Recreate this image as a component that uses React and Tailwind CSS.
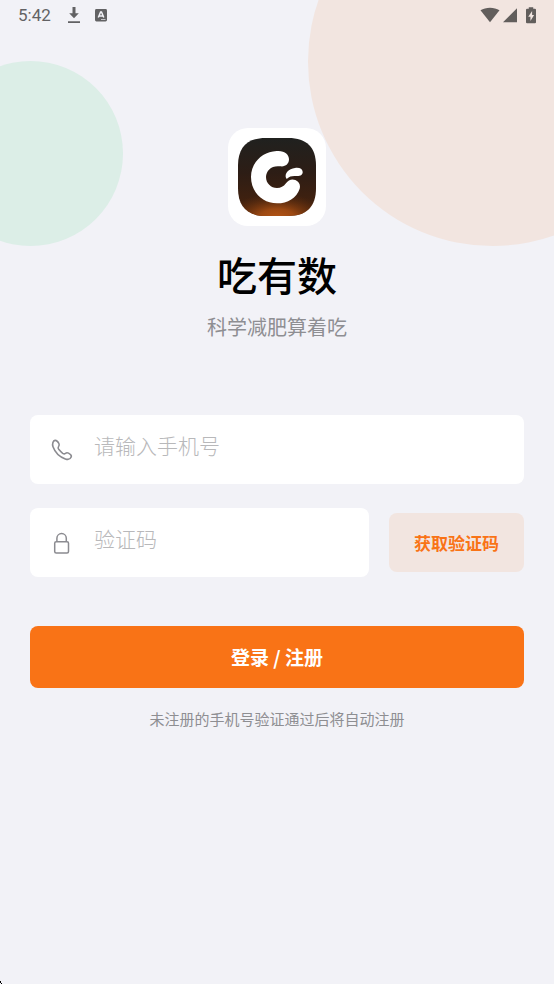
function StatusBar() {
  return (
    <header className="flex h-[30px] items-center justify-between px-[18px] text-[#626264]">
      <div className="flex items-center gap-4">
        <time className="font-[Roboto,'Liberation_Sans',sans-serif] text-[17px] leading-5">5:42</time>
        <div className="flex items-center gap-3.5">
          <svg className="h-[18px] w-3.5" viewBox="0 0 14 18" fill="currentColor" aria-label="下载">
            <path d="M5.5 1h3v6.200h3.300L7 12.200 2.200 7.200h3.300zM1 15.200h12v1.700H1z" />
          </svg>
          <svg className="h-[14px] w-3" viewBox="0 0 12 14" aria-label="输入法">
            <rect x="0" y="1" width="12" height="12.500" rx="1.400" fill="currentColor" />
            <path d="M3.300 9.500 5.600 4h.9l2.300 5.500M4.300 8h3.500" fill="none" stroke="#f2f2f7" strokeWidth="1.500" />
            <path d="M6 11.500h4.500" stroke="#f2f2f7" strokeWidth="0.700" />
          </svg>
        </div>
      </div>
      <div className="flex items-center text-[#625e5c]">
        <svg className="h-4 w-5" viewBox="0 0 20 16" fill="currentColor" aria-label="无线网络">
          <path d="M.5 3.300C5.800-.2 14.200-.2 19.500 3.300L10 15.200z" />
        </svg>
        <svg className="ml-[3px] h-4 w-3.5" viewBox="0 0 14 16" fill="currentColor" aria-label="信号">
          <path d="M14 1.200V15.200H0z" />
        </svg>
        <svg className="ml-[9px] h-[17px] w-[10px]" viewBox="1 0 9 17" preserveAspectRatio="none" aria-label="正在充电">
          <path d="M3.500 0.200h4v1.500h1.500q1 0 1 1v12.500q0 1-1 1H2q-1 0-1-1V2.700q0-1 1-1h1.500z" fill="currentColor" />
          <path d="M6.500 4 3 9.700h2v4.300L8.300 8H6.500z" fill="#f1e5e0" />
        </svg>
      </div>
    </header>
  );
}

function Logo() {
  return (
    <div className="flex size-[98px] items-center justify-center rounded-[20px] bg-white">
      <svg className="size-[78px]" viewBox="54 54 234 234" role="img" aria-label="吃有数">
        <defs>
          <linearGradient id="base" x1="0" y1="0" x2="0" y2="1">
            <stop offset="0" stopColor="#20211f" />
            <stop offset="0.45" stopColor="#2d1d15" />
            <stop offset="1" stopColor="#4a230c" />
          </linearGradient>
          <radialGradient id="glow" gradientUnits="userSpaceOnUse" cx="0" cy="0" r="1" gradientTransform="translate(171 292) scale(150 72)">
            <stop offset="0" stopColor="#b35414" />
            <stop offset="0.35" stopColor="#a54d13" stopOpacity="0.9" />
            <stop offset="1" stopColor="#6b310c" stopOpacity="0" />
          </radialGradient>
          <clipPath id="tile">
            <path d="M54 137C54 82 82 54 137 54H205C260 54 288 82 288 137V205C288 260 260 288 205 288H137C82 288 54 260 54 205Z" />
          </clipPath>
        </defs>
        <g clipPath="url(#tile)">
          <rect x="54" y="54" width="234" height="234" fill="url(#base)" />
          <rect x="54" y="54" width="234" height="234" fill="url(#glow)" />
        </g>
        <path
          fill="#fff"
          d="M170 93C194 91 207 103 207 118C207 132 196 141 181 139C156 135 138 151 138 171C138 190 153 204 171 204C183 204 190 200 198 190C205 180 215 176 226 180C238 185 242 195 239 206C230 234 203 250 171 250C127 250 93 215 93 171C93 128 127 95 170 93Z"
        />
        <path
          fill="#fff"
          d="M198 174C193 160 206 146 225 144C239 142 247 147 248 155C249 164 241 169 228 168C215 167 208 170 204 174C201 177 199 177 198 174Z"
        />
      </svg>
    </div>
  );
}

function PhoneIcon() {
  return (
    <svg className="size-6 shrink-0" viewBox="0 0 24 24" fill="none" stroke="#8b8b90" strokeWidth="1.600" strokeLinejoin="round" aria-hidden="true">
      <path d="M5 2.400C6.400 2.200 7.800 3.400 8.900 5.500C9.600 6.900 9.400 7.700 8.500 8.700C7.800 9.500 7.900 10.100 8.700 11.300C9.900 12.800 11.200 14.100 12.700 15.300C13.900 16.100 14.500 16.200 15.300 15.500C16.300 14.600 17.100 14.400 18.500 15.100C20.600 16.200 21.800 17.600 21.200 19C20.400 20.900 18.100 21.900 15.300 20.900C9.500 18.800 5 14.200 3 8.700C2 5.900 3.100 2.700 5 2.400Z" />
    </svg>
  );
}

function LockIcon() {
  return (
    <svg className="size-6 shrink-0" viewBox="0 0 24 24" fill="none" stroke="#8b8b90" strokeWidth="1.500" aria-hidden="true">
      <rect x="4.700" y="10.700" width="13.800" height="11.300" rx="1.500" />
      <path d="M6.900 10.700V7.300a4.700 4.700 0 0 1 9.400 0v3.400" />
    </svg>
  );
}

function Field({ id, label, icon, type, mode }) {
  return (
    <div className="flex h-[69px] min-w-0 flex-1 items-center gap-5 rounded-lg bg-white px-5">
      <label htmlFor={id} aria-label={label}>{icon}</label>
      <input
        id={id}
        type={type}
        inputMode={mode}
        placeholder={label}
        className="h-full min-w-0 flex-1 bg-transparent pb-2.5 text-[21px] font-light text-black outline-none placeholder:text-[#b8b8ba]"
      />
    </div>
  );
}

export default function App() {
  return (
    <div className="relative isolate min-h-screen overflow-hidden bg-[#f2f2f7] font-['Noto_Sans_CJK_SC','Noto_Sans',sans-serif]">
      <div className="absolute -top-[123px] -right-[123px] -z-10 size-[369px] rounded-full bg-[#f2e5e0]" />
      <div className="absolute top-[61px] -left-[62px] -z-10 size-[185px] rounded-full bg-[#dceee7]" />
      <StatusBar />
      <main className="px-[30px] pt-[98px]">
        <div className="flex flex-col items-center">
          <Logo />
          <h1 className="mt-[18px] text-[40px] leading-[60px] font-medium text-black">吃有数</h1>
          <p className="mt-[9px] text-xl leading-7 text-[#8e8e92]">科学减肥算着吃</p>
        </div>
        <form className="mt-[74px]" onSubmit={(event) => event.preventDefault()}>
          <Field id="phone" label="请输入手机号" icon={<PhoneIcon />} type="tel" mode="tel" />
          <div className="mt-6 flex items-center gap-5">
            <Field id="code" label="验证码" icon={<LockIcon />} type="text" mode="numeric" />
            <button type="button" className="h-[59px] w-[135px] shrink-0 rounded-lg bg-[#f2e5e0] text-[17px] font-bold text-[#f97316]">
              获取验证码
            </button>
          </div>
          <button type="submit" className="mt-[49px] h-[62px] w-full rounded-lg bg-[#f97316] text-[19px] font-bold text-white">
            登录 / 注册
          </button>
        </form>
        <p className="mt-[19px] text-center text-[15px] leading-6 text-[#8e8e92]">未注册的手机号验证通过后将自动注册</p>
      </main>
      <svg className="absolute bottom-0 left-0 h-[3px] w-0.5" viewBox="0 0 2 3" shapeRendering="crispEdges" aria-hidden="true">
        <path d="M0 0h1v2h1v1H1V2H0z" fill="#000" />
      </svg>
    </div>
  );
}
